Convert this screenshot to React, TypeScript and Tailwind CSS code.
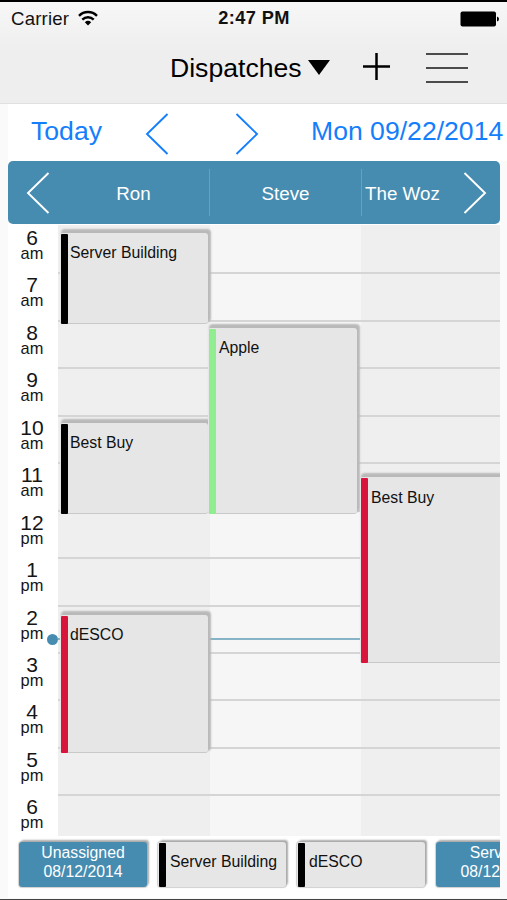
import React from 'react'

type Job = { name: string; bar: string; box: string; label: string };

const hours = ['6 am', '7 am', '8 am', '9 am', '10 am', '11 am', '12 pm', '1 pm', '2 pm', '3 pm', '4 pm', '5 pm', '6 pm'];

const columns: { className: string; jobs: Job[] }[] = [
  {
    className: 'w-[152px] bg-[#efefef]',
    jobs: [
      { name: 'Server Building', bar: 'bg-black', box: 'mt-[8px] ml-[2px] w-[148px] h-[91px]', label: 'pl-[10px] pt-[10px]' },
      { name: 'Best Buy', bar: 'bg-black', box: 'mt-[99px] ml-[2px] w-[148px] h-[91px]', label: 'pl-[10px] pt-[10px]' },
      { name: 'dESCO', bar: 'bg-[#d9143c]', box: 'mt-[101px] ml-[2px] w-[148px] h-[138px]', label: 'pl-[10px] pt-[10px]' },
    ],
  },
  {
    className: 'w-[151px] bg-[#f6f6f6]',
    jobs: [
      { name: 'Apple', bar: 'bg-[#90ee90]', box: 'mt-[103px] -ml-[2px] w-[149px] h-[186px]', label: 'pl-[11px] pt-[10px]' },
    ],
  },
  {
    className: 'w-[139px] bg-[#efefef]',
    jobs: [
      { name: 'Best Buy', bar: 'bg-[#d9143c]', box: 'mt-[252px] -ml-[1px] w-[151px] h-[186px]', label: 'pl-[11px] pt-[11px]' },
    ],
  },
];

const Chevron = ({ right, className }: { right?: boolean; className: string }) => (
  <svg className={className} width="24" height="42" viewBox="0 0 24 42" fill="none" stroke="currentColor" strokeWidth="1.9">
    <path d={right ? 'M1.5 1L22 21L1.5 41' : 'M22.5 1L2 21L22.5 41'} />
  </svg>
)

const StatusBar = () => (
  <div className="grid grid-cols-3 items-center h-[33px] pt-px pl-[11px] pr-[8px]">
    <div className="flex items-center gap-[9px] text-[18.6px]">
      <span className="w-[58px] whitespace-nowrap tracking-[0.2px]">Carrier</span>
      <svg width="20" height="16" viewBox="0 0 20 16" fill="none" stroke="black" strokeWidth="2.4" className="-mt-[2px]">
        <path d="M1 5.8C6 0.7 14 0.7 19 5.8" />
        <path d="M4.3 9.6C7.5 6.4 12.5 6.4 15.7 9.6" />
        <path d="M6.8 12.2Q10 9.4 13.2 12.2L10 15.4Z" fill="black" stroke="none" />
      </svg>
    </div>
    <div className="text-center pr-[2px] font-bold text-[18.2px] tracking-[0.4px] whitespace-nowrap">2:47 PM</div>
    <svg className="justify-self-end -mt-px" width="39" height="16" viewBox="0 0 39 16">
      <rect x="0.5" y="0.5" width="35.5" height="15" rx="2" />
      <path d="M37 5.5Q39 6 39 8T37 10.5Z" />
    </svg>
  </div>
)

const JobCard = ({ name, bar, box, label }: Job) => (
  <div className={`${box} flex shrink-0 rounded-[3px] bg-[#e6e6e6] border-b-[1.5px] border-[#c9c9c9] shadow-[2px_-3px_2px_1px_#b9b9b9]`}>
    <div className={`${bar} w-[7px] shrink-0 mt-px -mb-[1px] ml-px rounded-[1px]`} />
    <div className={`${label} -ml-[8px] whitespace-nowrap text-[15.8px] leading-5`}>{name}</div>
  </div>
)

const Calendar = () => (
  <div className="flex h-[611px] mt-px overflow-hidden">
    <div className="w-[50px] shrink-0 pt-[3px]">
      {hours.map((hour) => (
        <div key={hour} className="h-[47.45px] w-[48px] flex flex-col items-center text-[#151515]">
          <span className="text-[21px] leading-[20px]">{hour.split(' ')[0]}</span>
          <span className="text-[16.4px] leading-[10px]">{hour.split(' ')[1]}</span>
        </div>
      ))}
    </div>
    <div className="grid w-[442px] h-[611px]">
      <div className="col-start-1 row-start-1 flex h-[611px]">
        {columns.map((column, i) => (
          <div key={i} className={column.className} />
        ))}
      </div>
      <div className="col-start-1 row-start-1 h-[611px] pt-[2px] overflow-hidden">
        {hours.map((hour) => (
          <div key={hour} className="h-[47.45px] border-b-2 border-[#d5d5d5]" />
        ))}
      </div>
      {/* current time */}
      <div className="col-start-1 row-start-1 mt-[413px] flex h-[2px] items-center bg-[#86b4c6] relative">
        <div className="size-[11px] shrink-0 rounded-full bg-[#468cb1] relative -left-[11px]" />
      </div>
      <div className="col-start-1 row-start-1 flex h-[611px] relative">
        {columns.map((column, i) => (
          <div key={i} className={`${column.className} !bg-transparent shrink-0 flex flex-col`}>
            {column.jobs.map((job) => <JobCard key={job.name} {...job} />)}
          </div>
        ))}
      </div>
    </div>
  </div>
)

const tray = 'shrink-0 h-[45px] rounded-[3px] shadow-[2px_-2px_2px_0px_#aaaaaa,0_0_1px_1px_#cfcfcf]';

const Tray = () => (
  <div className="flex gap-[11px] h-[62px] pt-[6px] pl-[11px] overflow-hidden text-[15.8px] leading-[19px]">
    <div className={`${tray} w-[128px] bg-[#468cb1] text-white text-center pt-px`}>Unassigned<br />08/12/2014</div>
    <div className={`${tray} w-[128px] flex bg-[#e6e6e6]`}>
      <div className="w-[7px] h-[44px] mt-px ml-px rounded-[1px] bg-black" />
      <span className="pl-[4px] pt-[10px] whitespace-nowrap">Server Building</span>
    </div>
    <div className={`${tray} w-[128px] flex bg-[#e6e6e6]`}>
      <div className="w-[7px] h-[44px] mt-px ml-px rounded-[1px] bg-black" />
      <span className="pl-[4px] pt-[10px]">dESCO</span>
    </div>
    <div className={`${tray} w-[128px] bg-[#468cb1] text-white text-center pt-px whitespace-nowrap`}>Services<br />08/12/2014</div>
  </div>
)

const App = () => {
  return (
    <div className="w-[507px] h-[900px] overflow-hidden bg-[#fafafa] text-[#111] font-['Liberation_Sans',Arial,sans-serif] border-t-2 border-t-black border-b border-b-[#444]">
      <header className="h-[102px] bg-linear-to-b from-[#f7f7f7] from-0% via-[#eeeeee] via-50% to-[#eeeeef] border-b border-[#e0e0e0]">
        <StatusBar />
        <div className="flex items-center h-[66px] pl-[170px] text-black">
          <span className="w-[133px] mt-px text-[26.6px] whitespace-nowrap">Dispatches</span>
          <svg className="ml-[5px] -mt-px" width="22" height="15" viewBox="0 0 22 15"><path d="M0 0H22L11 15Z" /></svg>
          <svg className="ml-[33px] -mt-[3px]" width="27" height="27" viewBox="0 0 27 27" stroke="black" strokeWidth="2.5"><path d="M13.5 0V27M0 13.5H27" /></svg>
          <svg className="ml-[36px]" width="42" height="32" viewBox="0 0 42 32" stroke="#4b4b4b" strokeWidth="1.8"><path d="M0 2H42M0 16H42M0 30H42" /></svg>
        </div>
      </header>

      <div className="ml-[8px] w-[499px]">
        <div className="flex items-center h-[57px] pl-[23px] bg-white text-[#147efb] text-[26.6px] whitespace-nowrap">
          <span className="w-[71px] -mt-[2px]">Today</span>
          <Chevron className="ml-[43px] mt-[3px]" />
          <Chevron right className="ml-[66px] mt-[3px]" />
          <span className="ml-[52px] -mt-[2px]">Mon 09/22/2014</span>
        </div>
      </div>

      <main className="ml-[8px] w-[492px] bg-white">
        <div className="flex items-center h-[63px] rounded-[5px] bg-[#468cb1] text-white text-[18.8px]">
          <Chevron className="ml-[18px] mr-[8px] shrink-0" />
          <div className="w-[151px] pt-[3px] text-center">Ron</div>
          <div className="w-px h-[47px] bg-[#64a2c2]" />
          <div className="w-[151px] pt-[3px] text-center">Steve</div>
          <div className="w-px h-[47px] bg-[#64a2c2]" />
          <div className="pl-[3px] pt-[3px] w-[101px] whitespace-nowrap">The Woz</div>
          <Chevron right className="shrink-0" />
        </div>
        <Calendar />
        <Tray />
      </main>
    </div>
  )
}

export default App;
